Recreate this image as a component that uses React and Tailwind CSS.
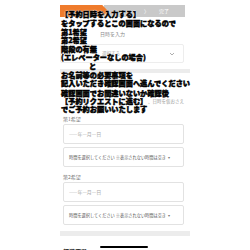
import React from "react";

const lines = [
  { t: "【予約日時を入力する】", top: 10 },
  { t: "をタップするとこの画面になるので", top: 19 },
  { t: "第1希望", top: 28 },
  { t: "第2希望", top: 36 },
  { t: "階段の有無", top: 45 },
  { t: "(エレベーターなしの場合)", top: 53 },
  { t: "と", top: 62, center: true },
  { t: "お名前等の必要事項を", top: 71 },
  { t: "記入いただき確認画面へ進んでください", top: 79 },
  { t: "確認画面でお間違いないか確認後", top: 89 },
  { t: "【予約リクエストに進む】", top: 97 },
  { t: "でご予約お願いいたします", top: 105 },
];

function Chevron() {
  return (
    <svg width="6" height="4" viewBox="0 0 6 4" className="shrink-0">
      <path d="M1 1 L3 3 L5 1" fill="none" stroke="#999" strokeWidth="0.8" />
    </svg>
  );
}

function DateGroup({ label }) {
  return (
    <div className="flex flex-col">
      <div className="text-[5px] leading-[6px] text-[#777] pl-[3px]">{label}</div>
      <div className="mt-[2px] ml-[3px] mr-[6px] h-[20px] border border-[#e2e2e2] rounded-[2px] flex items-center pl-[5px] text-[5px] text-[#aaa]">
        ——年—月—日
      </div>
      <div className="mt-[3px] ml-[3px] mr-[6px] h-[20px] border border-[#e2e2e2] rounded-[2px] flex items-center px-[5px] gap-[2px] text-[4.2px] text-[#555] whitespace-nowrap overflow-hidden">
        <span>時間を選択してください ※表示されない時間は空き</span>
        <span className="text-[#777]">▾</span>
      </div>
    </div>
  );
}

export default function App() {
  return (
    <div className="relative w-[250px] h-[250px] bg-white overflow-hidden font-['Noto_Sans_CJK_JP','Noto_Sans',sans-serif]">
      <div className="ml-[60px] w-[130px] flex flex-col">
        {/* step bar */}
        <div className="mt-[5px] h-[12px] flex w-[125px]">
          <div className="w-[48px] bg-[#ef7b2c] [clip-path:polygon(0_0,88%_0,100%_50%,88%_100%,0_100%)]" />
          <div className="flex-1 bg-[#c9c9c9] -ml-[4px] flex items-center text-white text-[5px]">
            <span className="ml-[40px]">〉</span>
            <span className="ml-[10px]">完了</span>
          </div>
        </div>
        <div className="h-[14px]" />
        <div className="text-[5px] text-[#888] pl-[40px] leading-[6px]">日時を入力</div>
        <div className="h-[6px]" />
        <div className="mt-[1px] h-[19px] mr-[6px] border border-[#ededed] rounded-[2px] flex items-center justify-between pl-[41px] pr-[8px] text-[4.5px] text-[#aaa]">
          <span>選択する</span>
          <Chevron />
        </div>
        <div className="mt-[6px] h-[4px] bg-[#ececec]" />
        <div className="h-[25px]" />
        <div className="text-[4.5px] text-[#999] pl-[88px] leading-[6px] whitespace-nowrap">、日時を仮おさえ</div>
        <div className="h-[12px]" />
        <DateGroup label="第1希望" />
        <div className="h-[7px]" />
        <DateGroup label="第2希望" />
        <div className="mt-[6px] h-[5px] bg-[#ececec]" />
        <div className="mt-[12px] flex items-start">
          <span className="text-[6px] font-bold text-[#222] pl-[3px] leading-[8px]">都道府県</span>
        </div>
      </div>
      {/* home indicator */}
      <div className="absolute left-[100px] top-[246px] w-[48px] h-[1.5px] bg-black rounded-full" />
      {/* overlay text */}
      {lines.map((l, i) => (
        <div
          key={i}
          className={`absolute whitespace-nowrap text-[7.2px] leading-[8px] font-black text-black [-webkit-text-stroke:0.45px_black] [text-shadow:0_0_1.5px_white,0_0_1.5px_white,0_0_1px_white,0_0_1px_white] ${l.center ? "left-[89px]" : "left-[61px]"}`}
          style={{ top: l.top }}
        >
          {l.t}
        </div>
      ))}
    </div>
  );
}
